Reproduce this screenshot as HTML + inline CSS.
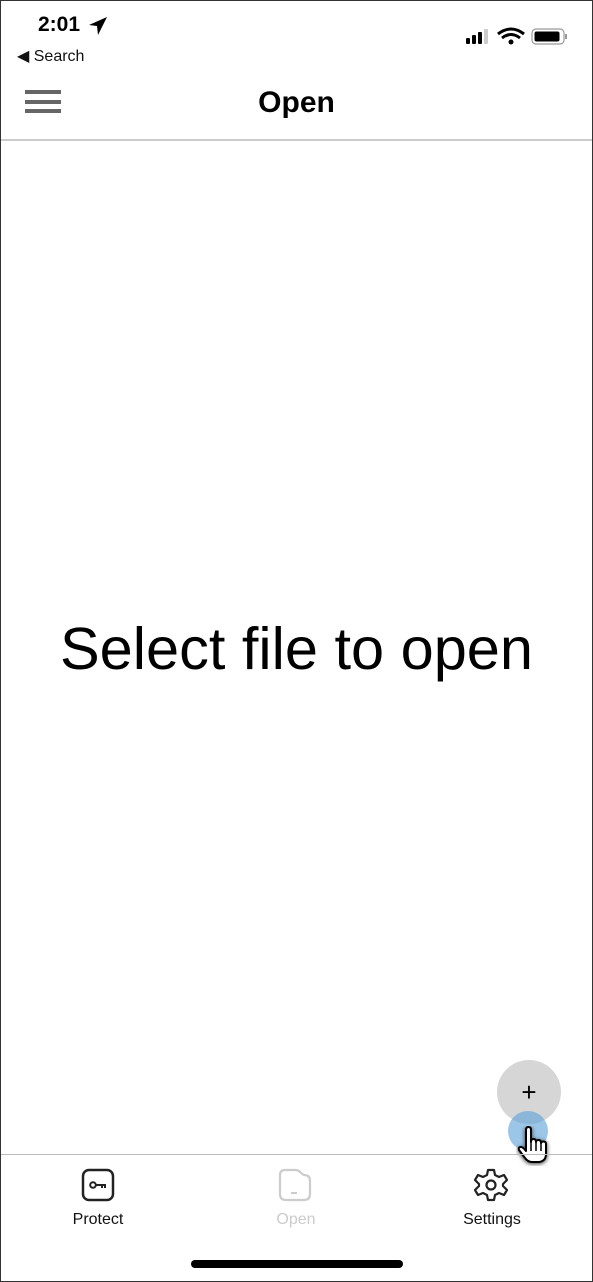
<!DOCTYPE html>
<html><head><style>
body{margin:0;width:593px;height:1282px;position:relative;overflow:hidden;background:#fff;font-family:"Liberation Sans",sans-serif;}
.frame{position:absolute;left:0;top:0;width:591px;height:1280px;border:1px solid #333;}
.abs{position:absolute;}
</style></head><body>
<div class="frame"></div>
<div class="abs" style="left:38px;top:13px;font-size:21px;font-weight:bold;color:#000">2:01</div>
<svg class="abs" style="left:88px;top:16px" width="20" height="20" viewBox="0 0 20 20"><path d="M19 1 L1 9 L9 10 L10 19 Z" fill="#000"/></svg>
<div class="abs" style="left:17px;top:46px;font-size:16px;color:#111">◀ Search</div>
<svg class="abs" style="left:465px;top:27px" width="106" height="20" viewBox="0 0 106 20">
<rect x="1" y="11" width="4" height="6" rx="1" fill="#000"/><rect x="7" y="8" width="4" height="9" rx="1" fill="#000"/><rect x="13" y="5" width="4" height="12" rx="1" fill="#000"/><rect x="19" y="2" width="4" height="15" rx="1" fill="#ccc"/>
<path d="M33 7 Q46 -3 59 7" stroke="#000" stroke-width="3" fill="none"/><path d="M37 11 Q46 4 55 11" stroke="#000" stroke-width="3" fill="none"/><circle cx="46" cy="15" r="2.5" fill="#000"/>
<rect x="67" y="2" width="32" height="15" rx="4" fill="none" stroke="#999" stroke-width="1.2"/><rect x="69.5" y="4.5" width="25" height="10" rx="2" fill="#000"/><rect x="100" y="7" width="2" height="5" fill="#999"/>
</svg>
<div class="abs" style="left:25px;top:90px;width:36px;height:4px;background:#666"></div>
<div class="abs" style="left:25px;top:100px;width:36px;height:4px;background:#666"></div>
<div class="abs" style="left:25px;top:109px;width:36px;height:4px;background:#666"></div>
<div class="abs" style="left:0;width:593px;top:86px;text-align:center;font-size:30px;font-weight:bold;color:#000">Open</div>
<div class="abs" style="left:1px;width:591px;top:139px;height:2px;background:#ccc"></div>
<div class="abs" style="left:0;width:593px;top:614px;text-align:center;font-size:59.5px;color:#000">Select file to open</div>
<div class="abs" style="left:497px;top:1060px;width:64px;height:64px;border-radius:50%;background:#d6d6d6;text-align:center;line-height:64px;font-size:26px;color:#000">+</div>
<div class="abs" style="left:508px;top:1111px;width:40px;height:40px;border-radius:50%;background:rgba(90,160,215,0.6)"></div>
<svg class="abs" style="left:516px;top:1126px" width="36" height="40" viewBox="0 0 36 40"><path d="M10 4 Q10 1 12.5 1 Q15 1 15 4 V16 Q15 13 17.5 13 Q20 13 20 16 Q20 14 22.5 14 Q25 14 25 17 Q25 15.5 27.5 15.5 Q30 15.5 30 18 V28 Q30 35 23 36 H16 Q12 36 9 32 L3 24 Q2 21 5 21 Q7 21 10 25 Z" fill="#fff" stroke="#000" stroke-width="2" stroke-linejoin="round" style="filter:drop-shadow(0 1px 2px #333)"/><path d="M15 16 V25 M20 16 V25 M25 17 V25" stroke="#000" stroke-width="1.5"/></svg>
<div class="abs" style="left:1px;width:591px;top:1154px;height:1px;background:#bbb"></div>
<svg class="abs" style="left:80px;top:1167px" width="36" height="36" viewBox="0 0 36 36"><rect x="3" y="3" width="30" height="30" rx="6" fill="none" stroke="#222" stroke-width="2.5"/><circle cx="13" cy="18" r="2.8" fill="none" stroke="#222" stroke-width="2"/><path d="M16 18 H26 M22 18 V21 M25 18 V21" stroke="#222" stroke-width="2" fill="none"/></svg>
<div class="abs" style="left:50px;width:96px;top:1211px;text-align:center;font-size:16px;color:#111">Protect</div>
<svg class="abs" style="left:277px;top:1167px" width="36" height="36" viewBox="0 0 36 36"><path d="M8 3 H18 Q22 3 24 6 L27 8 Q33 8 33 14 V27 Q33 33 27 33 H9 Q3 33 3 27 V8 Q3 3 8 3 Z" fill="none" stroke="#ccc" stroke-width="2.2"/><path d="M14 26 H20" stroke="#ccc" stroke-width="2"/></svg>
<div class="abs" style="left:246px;width:100px;top:1211px;text-align:center;font-size:16px;color:#ccc">Open</div>
<svg class="abs" style="left:473px;top:1167px" width="36" height="36" viewBox="0 0 36 36"><path d="M15 3 H21 L22 8 L26 10 L31 8 L34 13 L30 17 V19 L34 23 L31 28 L26 26 L22 28 L21 33 H15 L14 28 L10 26 L5 28 L2 23 L6 19 V17 L2 13 L5 8 L10 10 L14 8 Z" fill="none" stroke="#222" stroke-width="2.2" stroke-linejoin="round"/><circle cx="18" cy="18" r="4.5" fill="none" stroke="#222" stroke-width="2.2"/></svg>
<div class="abs" style="left:440px;width:104px;top:1211px;text-align:center;font-size:16px;color:#111">Settings</div>
<div class="abs" style="left:191px;top:1260px;width:212px;height:8px;border-radius:4px;background:#000"></div>
</body></html>
